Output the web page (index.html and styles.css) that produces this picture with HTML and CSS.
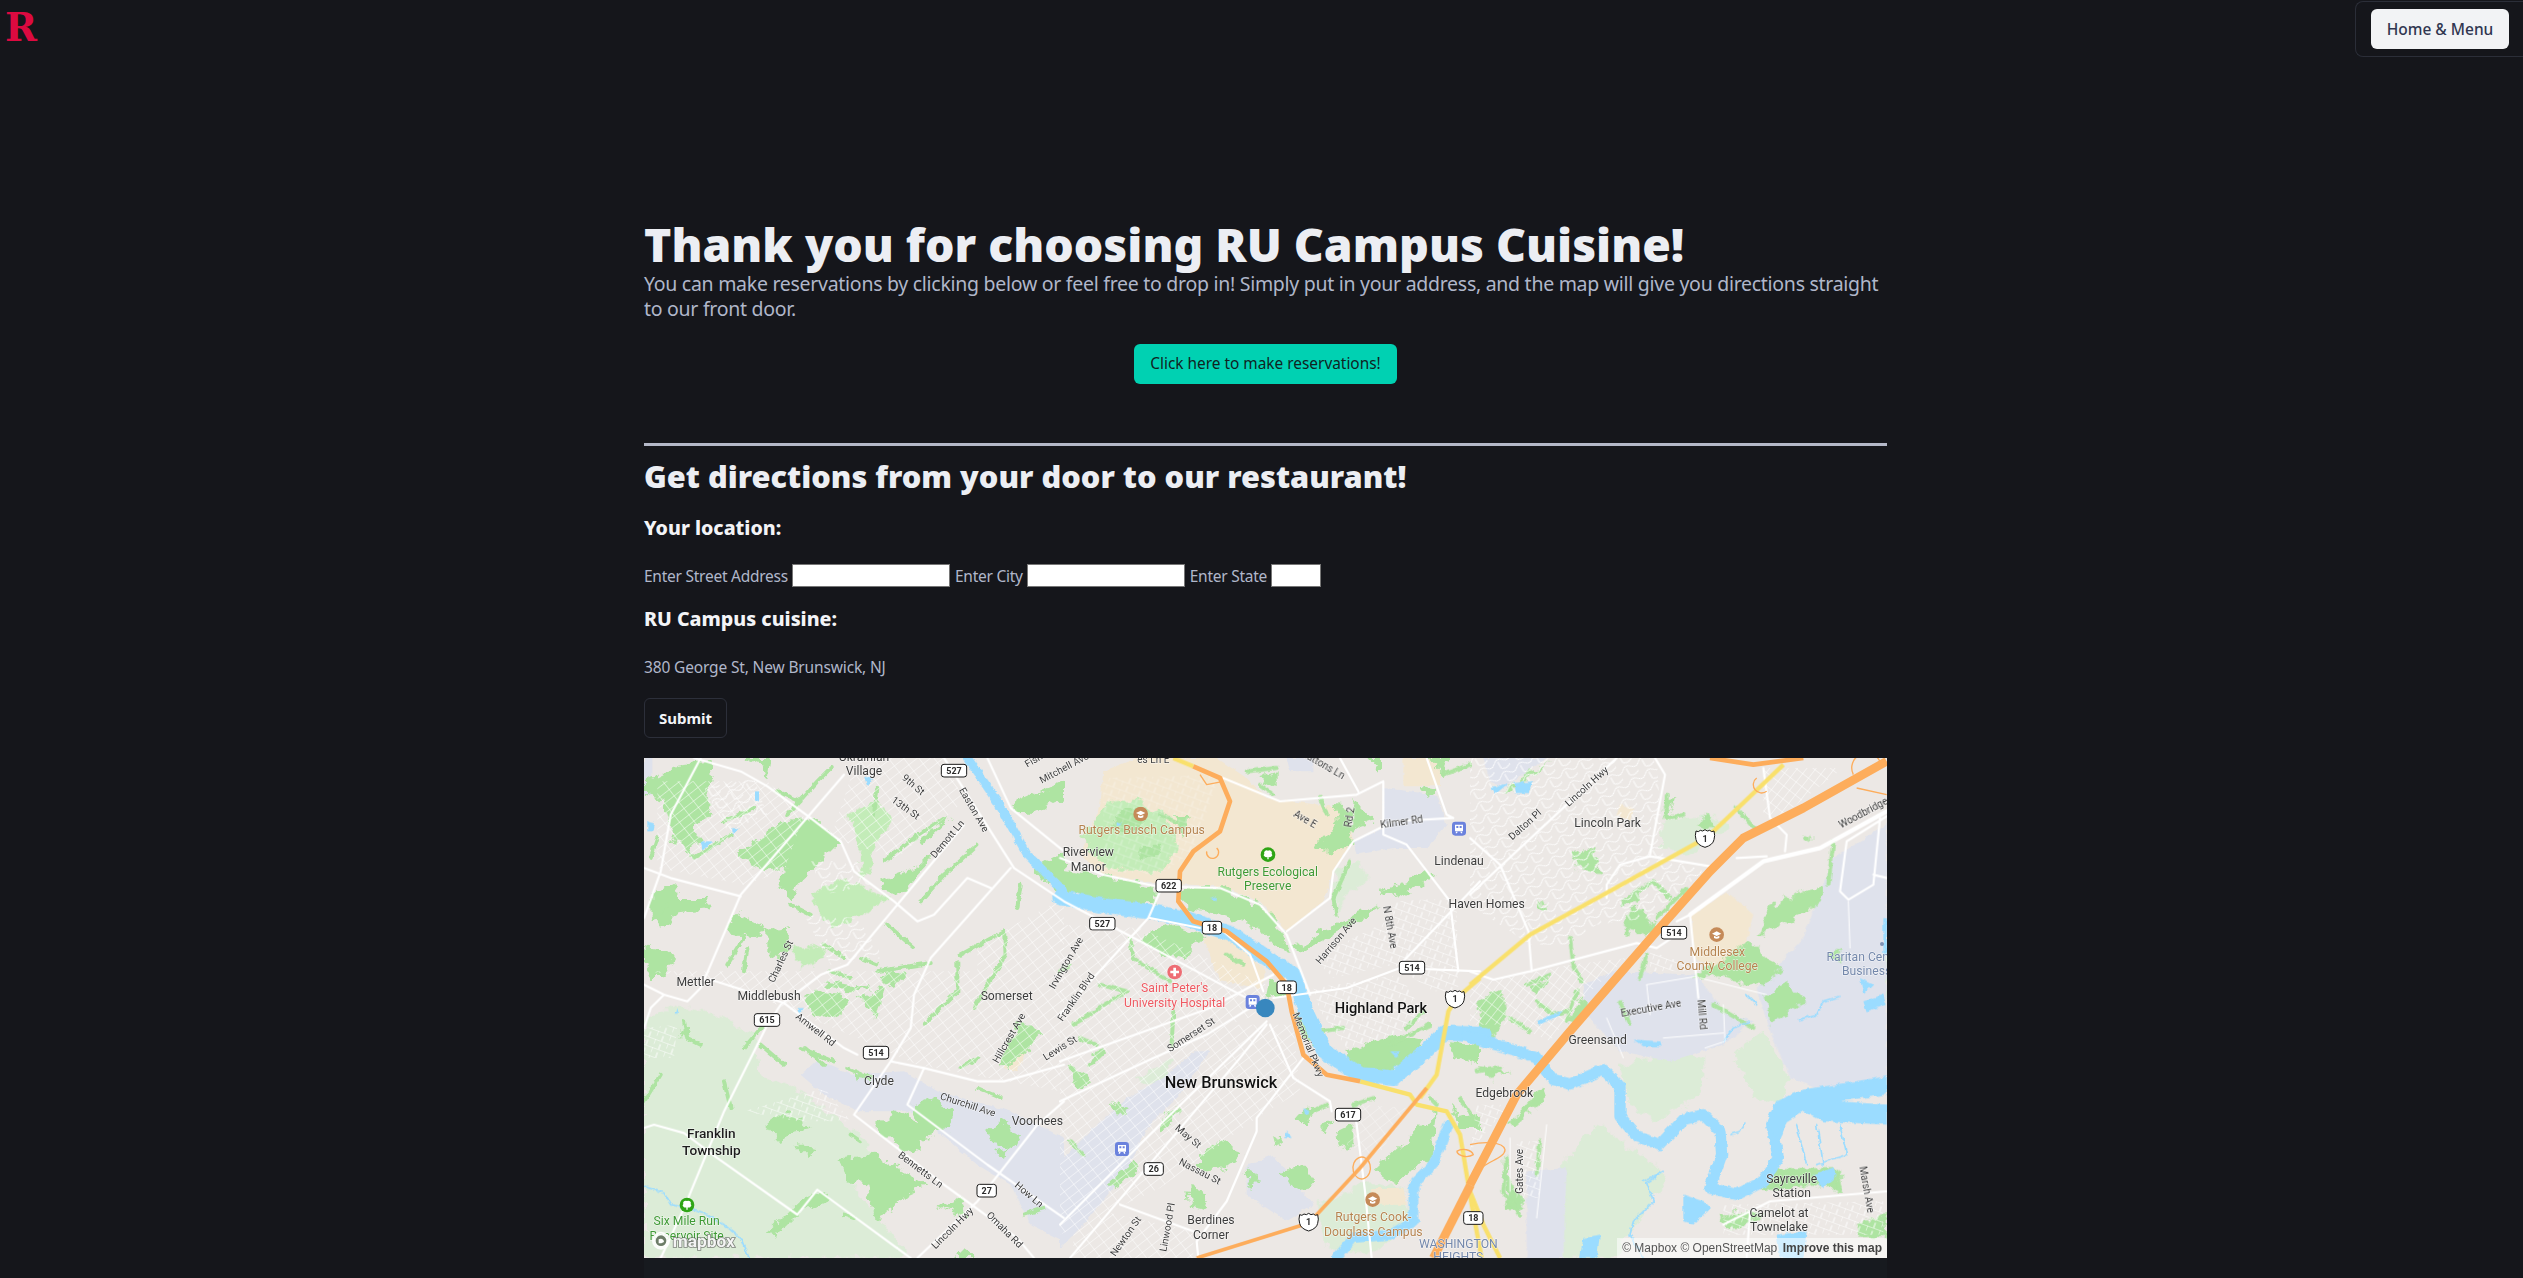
FILE: index.html
```html
<!DOCTYPE html>
<html lang="en">
<head>
<meta charset="utf-8">
<title>RU Campus Cuisine</title>
<link rel="stylesheet" href="styles.css">
</head>
<body>
<header class="topbar">
  <a class="logo" href="#">R</a>
  <nav class="menu-box"><button class="menu-btn" type="button">Home &amp; Menu</button></nav>
</header>
<main class="content">
  <h1 class="title">Thank you for choosing RU Campus Cuisine!</h1>
  <p class="lead">You can make reservations by clicking below or feel free to drop in! Simply put in your address, and the map will give you directions straight to our front door.</p>
  <div class="cta-row"><a class="cta" href="#">Click here to make reservations!</a></div>
  <hr class="rule">
  <h2 class="subtitle">Get directions from your door to our restaurant!</h2>
  <h3 class="label-head head-first">Your location:</h3>
  <form class="address-row">
    <label for="street">Enter Street Address</label><input id="street" class="field">
    <label for="city">Enter City</label><input id="city" class="field">
    <label for="state">Enter State</label><input id="state" class="field field-short">
  </form>
  <h3 class="label-head head-second">RU Campus cuisine:</h3>
  <p class="address">380 George St, New Brunswick, NJ</p>
  <button class="submit" type="button">Submit</button>
  <div class="map">
    <svg class="map-svg" viewBox="0 0 3729 1500" xmlns="http://www.w3.org/2000/svg" role="img" aria-label="Map of New Brunswick">
      <defs>
        <pattern id="g1" width="36" height="24" patternUnits="userSpaceOnUse" patternTransform="rotate(-38)"><path d="M0 0H36M0 0V24" class="grid"/></pattern>
        <pattern id="g2" width="32" height="22" patternUnits="userSpaceOnUse" patternTransform="rotate(-52)"><path d="M0 0H32M0 0V22" class="grid"/></pattern>
        <pattern id="g3" width="40" height="26" patternUnits="userSpaceOnUse" patternTransform="rotate(20)"><path d="M0 0H40M0 0V16M20 10V26" class="grid"/></pattern>
        <pattern id="g4" width="54" height="42" patternUnits="userSpaceOnUse" patternTransform="rotate(-30)"><path d="M0 10Q14 -4 27 10T54 10M12 10V32Q24 42 42 32" class="grid"/></pattern>
        <filter id="rough" x="-2%" y="-2%" width="104%" height="104%"><feTurbulence type="fractalNoise" baseFrequency=".03" numOctaves="4" seed="4"/><feDisplacementMap in="SourceGraphic" scale="42" xChannelSelector="R" yChannelSelector="G"/></filter>
        <filter id="rough-s" x="-2%" y="-2%" width="104%" height="104%"><feTurbulence type="fractalNoise" baseFrequency=".05" numOctaves="3" seed="9"/><feDisplacementMap in="SourceGraphic" scale="14" xChannelSelector="R" yChannelSelector="G"/></filter>
      </defs>
      <rect class="land" width="3729" height="1500"/>

      <g class="pale rough">
        <path d="M0 790L100 740 220 770 330 830 350 950 480 1010 640 1130 700 1200 610 1260 800 1500H0Z"/>
        <path transform="translate(2478 0)" d="M450 930L600 870 700 900 700 1000 560 1090 480 1040ZM280 1210L380 1100 520 1190 590 1260 500 1400 430 1500H270ZM790 890L880 820 960 960 930 1040 850 1020ZM1140 620L1200 540 1250 600V740H1160ZM580 190L720 170 780 210 650 290 570 270Z"/>
        <path transform="translate(1248 0)" d="M770 1340L930 1270 1040 1300 1050 1380 950 1480 800 1470ZM820 340L890 310 930 360 860 410 830 470ZM220 960L340 900 320 960 270 990Z"/>
      </g>

      <g class="urban rough-s">
        <path d="M470 950L520 905 620 950 780 940 880 1000 1100 1060 1260 1140V1450L1160 1400 1100 1280 1000 1220 880 1120 800 1060 640 1060 540 1010Z"/>
        <path d="M0 0H25V110H0Z"/>
        <path transform="translate(1248 0)" d="M0 1210L100 1110 200 1020 310 960 400 880 450 880 360 1010 260 1110 200 1240 70 1400 0 1470ZM560 1220L640 1190 760 1340 680 1390 560 1310ZM970 90L1130 110 1160 200 1100 270 1000 270 890 290 880 250 970 210ZM680 0H760V40H690Z"/>
        <path transform="translate(2478 0)" d="M900 820L860 690 1000 540 1090 300 1250 200V960L1040 990 960 960ZM340 680L430 640 680 650 760 760 850 790 760 860 600 910 450 880 340 760ZM170 1240L290 1230 280 1500H170ZM40 0H230L100 90 60 70Z"/>
      </g>

      <g class="campus rough-s">
        <path transform="translate(1248 0)" d="M130 40L230 0H470L560 60 620 120 850 150 880 250 820 340 790 430 680 520 600 430 480 385 290 375 130 350 60 290 120 150ZM430 540L500 530 620 640 600 690 480 670ZM930 1290L1030 1290 1040 1340 950 1340ZM1030 0H1140V85H1030Z"/>
        <path transform="translate(2478 0)" d="M665 470L770 400 850 470 830 550 750 640 670 600ZM450 140L490 150 480 190 440 170Z"/>
        <path d="M1090 900L1150 870 1120 940 1080 930Z"/>
      </g>

      <g class="parkpale rough">
        <path d="M500 410L600 360 660 390 730 420 660 470 560 510 520 470ZM610 170L700 130 750 190 690 250 680 340 640 360 650 260ZM440 570L530 560 540 600 470 630ZM550 720L620 720 590 770 550 790Z"/>
        <path transform="translate(1248 0)" d="M380 390L480 400 490 430 420 440ZM60 240L150 130 230 125 310 170 360 260 330 310 280 345 130 330Z"/>
      </g>
      <g class="green rough">
        <path d="M30 60L110 20 200 10 210 60 180 110 210 150 150 200 170 250 130 290 90 240 70 170 50 120 0 110 0 170 0 70ZM350 20L300 0H380L370 70ZM280 290L350 240 420 190 500 180 590 250 540 300 470 380 440 420 400 380 430 330 350 340ZM710 370L810 330 860 290 860 310 780 400 740 410ZM830 240L920 170 900 200 840 260ZM20 410L90 370 100 420 190 420 190 450 110 460 60 510 30 490ZM250 500L280 465 370 510 350 540 260 530ZM370 510L430 500 440 570 400 600 370 580ZM0 570L60 580 90 600 60 660 20 660 20 610 0 610ZM480 710L530 700 620 720 590 770 550 790 510 770ZM640 720L720 690 700 780 670 750ZM540 670L690 690 640 700 560 690ZM710 650L740 630 780 650 750 690 720 670ZM1060 920L1130 790 1200 830 1130 890 1090 930ZM1100 140L1260 70V120L1150 170ZM1170 330L1260 280V420L1200 370ZM800 1040L850 1020 930 1060 910 1120 830 1140 830 1090ZM690 1100L760 1060 830 1090 830 1190 770 1170ZM375 1420L470 1330 520 1300 560 1330 460 1370 390 1440ZM590 1200L700 1190 760 1230 850 1280 780 1310 740 1360 690 1380 670 1280 610 1270ZM1030 1120L1070 1090 1130 1130 1110 1170 1050 1160ZM370 1100L420 1060 500 1110 440 1120 410 1150ZM450 1160L520 1170 490 1200ZM1050 1180L1090 1170 1080 1200ZM880 1350L950 1320 970 1380ZM620 950L680 960 650 970ZM960 1470L1000 1500H930ZM100 840L140 830 120 800Z"/>
        <path transform="translate(1248 0)" d="M0 330L60 340 130 350 280 385 290 440 130 430 0 395ZM370 390L480 390 600 440 660 510 690 580 640 560 600 510 480 470 380 450ZM240 540L330 495 430 530 380 600 300 590ZM770 260L830 190 880 200 880 260 800 290ZM820 140L880 150 870 200 830 190ZM880 120L940 190 880 210ZM960 400L1100 340 1130 350 1000 420ZM700 570L880 470 960 440 880 500 710 590ZM610 720L640 670 680 700 650 730ZM700 760L760 830 800 880 770 880 720 820ZM860 880L1000 830 1090 850 1070 890 970 960 880 930ZM1170 850L1260 860V920L1180 900ZM940 1240L1130 1060 1120 1190 1000 1280ZM420 1180L490 1150 550 1190 500 1230 420 1240ZM385 1290L450 1300 440 1360 390 1350ZM300 1080L360 1040 330 1110 300 1120ZM670 1240L720 1220 770 1280 700 1290ZM150 1270L220 1210 240 1220 170 1290ZM20 920L100 970 60 990 30 960ZM150 1030L210 1050 180 1070ZM820 1130L880 1100 880 1170 830 1160ZM780 1100L820 1090 800 1130ZM560 1240L600 1260 570 1290ZM630 1130L670 1150 640 1170ZM700 1080L770 1040 740 1100ZM1170 1030L1200 1080 1260 1070V1110L1200 1110ZM1080 80L1140 90 1100 130ZM1100 0H1170L1150 50ZM920 0H960V50ZM590 60L650 40 650 90ZM250 260L300 260 280 300 240 310ZM340 180L380 180 370 230ZM150 180L210 150 260 180 220 230 160 210Z"/>
        <path transform="translate(2478 0)" d="M860 530L900 450 990 400 1060 380 1060 420 980 480 880 530ZM670 660L840 550 930 640 880 690 790 670 740 650ZM890 710L950 670 1000 730 900 800ZM460 500L500 440 560 500 530 530 480 520ZM450 420L510 390 515 420 460 440ZM310 280L370 270 390 350 330 340ZM20 730L100 690 110 780 60 850 30 800ZM290 790L340 710 355 750 310 800ZM580 130L610 120 590 180ZM680 210L710 160 740 210ZM1070 600L1110 570 1110 610ZM750 1370L880 1360 840 1400 770 1410ZM890 1230L1110 1230 1110 1300 1020 1280 880 1300ZM175 680L240 660 200 720ZM30 930L130 940 60 960ZM210 420L235 450 205 455ZM120 1090L220 980 230 1020 130 1110ZM100 1200L130 1290 170 1350 110 1350ZM1160 1400L1250 1370 1250 1440 1180 1440ZM200 30L240 10 130 100 100 100ZM1000 240L1020 230 1020 260Z"/>
      </g>
      <g class="strip rough-s">
        <path d="M30 480L70 440M250 620L300 540M300 640L310 570M120 790L130 840 170 860M300 870L360 800M350 860L420 920M470 870L570 910M610 930L680 960M0 1030L50 950M240 970L260 1050M860 615L700 640M950 590L1080 520 1085 590 1030 680 990 750M940 610L940 700 840 800M730 500L810 570M650 600L700 620M100 120L150 60M120 180L200 170M150 300L260 230M240 190L330 150M400 100L470 130M430 170L520 70 560 30M700 90L690 170M720 310L810 240 900 180M830 430L900 350 1000 260M1130 380L1120 450M480 870L540 920M1000 900L950 930M1000 990L1070 1020M620 1130L650 1150M1140 1370L1200 1350M600 1370L630 1380M440 440L500 470M540 560L600 600M420 200L460 260M20 300L40 240M560 640L620 660"/>
        <path transform="translate(1248 0)" d="M210 540L220 600 330 670M120 680L200 700 40 800M340 760L335 860M100 890L130 880 90 920M0 640L30 620M30 1150L70 1190M1040 810L1090 760M990 860L1110 800M780 820L850 810M1110 1020L1130 1040M1200 1020L1240 1080M560 40L650 30M870 310L820 420 830 470M1150 50L1230 20M300 170L350 190M600 80L640 110M780 120L800 170M60 840L110 860M500 590L550 620M760 1060L800 1040M880 1040L940 1020"/>
        <path transform="translate(2478 0)" d="M30 820L60 720M170 680L240 650M200 730L250 770 290 760M120 780L180 820M460 430L550 370 600 420M560 480L650 390M490 450L470 530M300 540L310 620 335 670M510 660L530 590M450 730L480 800M110 1200L100 1300 150 1370M210 1150L200 1250M800 150L860 220M1090 250L1075 380M590 110L590 180 640 170M1100 1240L1110 1300M290 790L320 700M730 740L850 810M20 940L90 930"/>
      </g>

      <g class="street-g1"><path fill="url(#g1)" d="M0 640H1250V1000L820 920 640 840 400 740 180 660ZM40 70H370L480 170 420 340 300 380 40 330ZM1000 560L1260 420 1260 760 1000 700ZM640 0H900L960 130 760 300 560 240Z"/></g>
      <g class="street-g2" transform="translate(1248 0)">
        <path fill="url(#g1)" d="M0 500L240 510 620 680 620 760 0 980ZM0 990L450 800 700 800 720 1000 590 1080 300 1290 0 1430ZM40 1340L400 1420 400 1500H40Z"/>
        <path fill="url(#g3)" d="M760 690L1020 650 1100 780 980 840 860 870 780 760ZM1000 430L1190 420 1195 700 1120 700 1000 620 820 660 760 600 1000 480Z"/>
        <path fill="url(#g3)" d="M130 60L480 50 400 280 300 350 130 340Z" opacity=".5"/>
        <path fill="url(#g1)" d="M900 1040L1050 1050 950 1200 860 1160Z" opacity=".6"/>
      </g>
      <g class="street-g3" transform="translate(2478 0)">
        <path fill="url(#g4)" d="M0 0H560L580 290 700 340 540 480 380 500 290 560 180 560 0 440Z"/>
        <path fill="url(#g2)" d="M0 680L300 620 470 600 340 720 240 850 130 800 0 800Z"/>
        <path fill="url(#g2)" d="M880 30H1120L940 170 880 170Z"/>
        <path fill="url(#g3)" d="M540 580L660 620 660 640 540 640ZM760 1340L1240 1330 1240 1430 760 1430ZM20 1040L120 1040 0 1180Z"/>
        <path fill="url(#g3)" d="M140 1150H210V1320H140Z"/>
      </g>
      <g class="street-g1"><path fill="url(#g4)" d="M180 90L330 60 370 170 250 220ZM500 310L640 310 680 380 540 410ZM480 470L640 480 720 600 560 620Z"/><path fill="url(#g3)" d="M300 1060L540 990 620 1090 460 1090ZM0 810L100 800 90 900 0 900Z"/></g>

      <g class="water rough-s">
        <path d="M970 0L1060 130 1150 290 1260 400" class="w-thin"/>
        <path d="M1248 418L1388 445 1528 462 1628 482 1768 530 1868 600 1950 650 1985 760 2040 880 2150 950 2250 960 2340 885 2400 825 2520 830" class="w-main"/>
        <path transform="translate(2478 0)" d="M-10 835L130 875 200 900 250 965 300 978 400 935 450 985 450 1075 500 1135 570 1160 640 1085 700 1070 750 1120 755 1190 720 1290 800 1310 880 1270 925 1200 905 1100 925 1050" class="w-mid"/>
        <path transform="translate(2478 0)" class="w-fill" d="M890 1090L920 1030 1000 995 1250 955V1010L1110 1030 1250 1040V1100L1060 1090 1000 1060 950 1090 930 1150ZM640 1310L700 1330 720 1350 670 1400 640 1390ZM1030 1250L1090 1225 1100 1255 1060 1290ZM920 1430L1010 1420 1000 1500H930ZM340 1440L390 1430 380 1500H330ZM490 845L570 850 575 865 520 865ZM130 75L190 70 175 105 135 105ZM65 90L115 75 75 110ZM200 790L280 755 260 775 210 800ZM1240 480H1250V590H1240ZM1170 660L1210 680 1180 710ZM1180 730L1240 710 1250 740 1190 760Z"/>
        <path transform="translate(2478 0)" class="w-line" d="M520 1270L580 1240 530 1275 550 1330 490 1390 480 1430 520 1500M760 850L790 810 840 790M985 785L1040 770 1060 730 1110 715M780 1130L810 1120 825 1095M980 1100L1010 1220M1040 1100L1060 1220M1110 1100L1130 1190 1040 1220M830 710L860 740"/>
        <path transform="translate(1248 0)" class="w-lineb" d="M830 1500L880 1440 990 1430 1060 1390 1060 1280 1120 1220 1165 1100"/>
        <path transform="translate(1248 0)" class="w-fill" d="M990 880L1020 880 1010 900ZM730 1050L750 1060 735 1070ZM680 1120L695 1140 675 1140ZM170 190L185 195 170 205ZM450 420L470 415 470 430Z"/>
        <path class="w-fill" d="M10 190L30 195 25 220 10 220ZM170 250L205 250 175 275ZM265 210L285 210 265 230ZM330 100L345 100 345 130 330 125ZM660 55L685 60 670 85ZM100 750L105 770 95 770ZM460 750L480 750 465 770Z"/>
        <path class="w-line" d="M0 1285L60 1305 80 1340 130 1350 190 1370 240 1400 290 1440 315 1500"/>
      </g>

      <g class="road">
        <path d="M150 0L290 40 370 85 500 180 590 250 630 340 750 430 820 490 870 470 970 360 1040 390"/>
        <path d="M600 50L290 410 170 690 130 730 60 710 20 750 0 810"/>
        <path d="M1100 330L860 600 810 710 800 810 740 910 630 1070 900 1280 1120 1440 1170 1500"/>
        <path d="M0 330L80 360 290 415"/>
        <path d="M170 0L80 170 50 340 0 480"/>
        <path d="M960 200L610 620 530 650 410 740 370 800 240 1060 120 1350 50 1500"/>
        <path d="M200 665L420 735 600 870 640 890"/>
        <path d="M740 910L840 930 1000 970 1080 970 1260 920"/>
        <path d="M840 930L790 1040 1030 1220 1260 1380"/>
        <path d="M0 1110L30 1100 120 1125 220 1200 460 1370 520 1295 800 1500"/>
        <path d="M900 0L1040 220 1110 330 1260 430 1508 560 1808 720"/>
        <path d="M820 1500L1000 1330 1180 1100 1260 1030"/>
        <path d="M1030 0L1100 150 1260 280"/>
        <path d="M0 680L60 710"/>
        <path transform="translate(1248 0)" d="M0 300L130 350 290 385 480 390 600 440 680 530 750 710"/>
        <path transform="translate(1248 0)" d="M270 480L420 510M300 400L265 480 100 660 0 770M640 720L860 690 1020 630 1260 640"/>
        <path transform="translate(1248 0)" d="M610 700L570 590 490 520M640 650L450 750 0 910M570 750L440 830 280 900 0 1030M620 790L300 1100 0 1400M620 800L540 900 30 1500M630 800L700 960 810 1030 815 1060"/>
        <path transform="translate(1248 0)" d="M730 900L590 1080 590 1120 500 1330 410 1450 415 1500M180 1340L400 1420M970 70L970 230 1040 260 1170 430 1195 640M1180 180L1000 190 880 250 820 340 810 420 680 520M1260 370L1020 620M490 60L660 130 890 110 970 70M840 0L895 100M1100 0L1160 170 1180 180"/>
        <path transform="translate(1248 0)" d="M885 1060L915 1300 935 1500"/>
        <path transform="translate(2478 0)" d="M440 0L0 410M0 240L90 320 175 520 185 640M0 640L70 665 180 640 500 555 560 570 620 530M555 0L585 50 540 290M540 295L450 320 410 380 410 420M540 295L720 325M880 30L900 180 950 230 945 280M620 490L660 470M800 300L890 295"/>
        <path transform="translate(2478 0)" class="road-thick" d="M660 470L880 310 1050 270 1250 160"/>
        <path transform="translate(2478 0)" d="M1250 175L1130 250 1110 400 1135 425 1210 380 1230 180M1210 350L1250 360M660 470L685 720M760 1400L900 1330 1250 1300M840 1360L830 1500"/>
        <path transform="translate(2478 0)" class="road-fine" d="M690 660L890 710M530 680L680 655M580 840L760 825M530 680L540 770M760 740L765 850 705 870M1135 430L1140 570M410 780L460 900M120 1140L120 1300M230 1100L200 1380"/>
      </g>

      <g class="hwy-y">
        <path transform="translate(2478 0)" d="M940 20L730 220 680 255 400 410 180 530 0 680"/>
        <path transform="translate(1248 0)" d="M1260 660L1190 720 1165 760 1130 950 1080 1020"/>
        <path transform="translate(1248 0)" d="M900 970L1050 1010 1070 1040 1160 1060 1200 1130 1235 1340 1265 1500"/>
        <path transform="translate(2478 0)" d="M0 1300L40 1400 90 1500"/>
        <path transform="translate(1248 0)" d="M340 0L400 25"/>
      </g>
      <g class="hwy-o">
        <path transform="translate(1248 0)" d="M400 25L480 60 510 130 480 220 400 280 360 340 355 430 400 490 500 520 620 610 680 680 695 760 730 890 800 950 900 970"/>
        <path transform="translate(1248 0)" class="hwy-thin" d="M1100 990L900 1230 770 1370 730 1400 410 1500"/>
        <path transform="translate(2478 0)" d="M720 0L850 20 1000 0"/>
        <path transform="translate(1248 0)" class="ramp" d="M880 1240a24 30 0 1 0 50 -20 24 30 0 0 0 -50 20M1190 1180a30 20 0 0 0 50 10 30 20 0 0 0 -50 -10M440 280a18 18 0 1 0 30 -10M420 50l20 30 50 -10"/>
        <path transform="translate(2478 0)" class="ramp" d="M0 1160C40 1150 100 1150 105 1175 105 1195 70 1205 40 1225M1150 50a40 40 0 0 1 80 -40M1160 90L1250 110M860 60a24 24 0 0 0 30 40"/>
      </g>
      <g class="hwy-w">
        <path transform="translate(2478 0)" d="M1250 10L1000 150 820 240 720 340 560 520 300 820 140 1010 0 1280"/>
        <path transform="translate(1248 0)" d="M1232 1280L1120 1500"/>
      </g>

      <g class="lb">
        <text x="660" y="8">Ukrainian</text><text x="660" y="50">Village</text>
        <text x="155" y="685">Mettler</text><text x="375" y="725">Middlebush</text><text x="1088" y="725">Somerset</text>
        <text x="705" y="980">Clyde</text><text x="1180" y="1100">Voorhees</text>
        <text class="lb-dark" x="202" y="1140">Franklin</text><text class="lb-dark" x="202" y="1190">Township</text>
        <text class="lb-park" x="128" y="1402">Six Mile Run</text><text class="lb-park" x="128" y="1445">Reservoir Site</text>
      </g>
      <g class="lb lb-road">
        <text transform="rotate(40 808 80)" x="808" y="90">9th St</text>
        <text transform="rotate(35 785 150)" x="785" y="160">13th St</text>
        <text transform="rotate(60 990 155)" x="990" y="165">Easton Ave</text>
        <text transform="rotate(-50 910 243)" x="910" y="253">Demott Ln</text>
        <text transform="rotate(-65 410 610)" x="410" y="620">Charles St</text>
        <text transform="rotate(38 515 815)" x="515" y="825">Amwell Rd</text>
        <text transform="rotate(-60 1095 840)" x="1095" y="850">Hillcrest Ave</text>
        <text transform="rotate(18 972 1040)" x="972" y="1050">Churchill Ave</text>
        <text transform="rotate(37 830 1235)" x="830" y="1245">Bennetts Ln</text>
        <text transform="rotate(40 1155 1310)" x="1155" y="1320">How Ln</text>
        <text transform="rotate(45 1082 1415)" x="1082" y="1425">Omaha Rd</text>
        <text transform="rotate(-45 925 1410)" x="925" y="1420">Lincoln Hwy</text>
        <text transform="rotate(-60 1266 615)" x="1266" y="625">Irvington Ave</text>
        <text transform="rotate(-55 1296 717)" x="1296" y="727">Franklin Blvd</text>
        <text transform="rotate(-32 1248 870)" x="1248" y="880">Lewis St</text>
        <text transform="rotate(-28 1260 30)" x="1260" y="40">Mitchell Ave</text>
        <text transform="rotate(-30 1180 0)" x="1180" y="10">Fisher</text>
      </g>
      <g class="lb" transform="translate(1248 0)">
        <text x="85" y="294">Riverview</text><text x="85" y="338">Manor</text>
        <text class="lb-campus" x="245" y="228">Rutgers Busch Campus</text>
        <text class="lb-park" x="623" y="353">Rutgers Ecological</text><text class="lb-park" x="623" y="396">Preserve</text>
        <text class="lb-hosp" x="344" y="702">Saint Peter's</text><text class="lb-hosp" x="344" y="746">University Hospital</text>
        <text class="lb-city" x="483" y="990">New Brunswick</text><text class="lb-hp" x="963" y="765">Highland Park</text>
        <text x="453" y="1398">Berdines</text><text x="453" y="1442">Corner</text>
        <text class="lb-campus" x="940" y="1390">Rutgers Cook-</text><text class="lb-campus" x="940" y="1433">Douglass Campus</text>
        <text class="lb-nbhd" x="1195" y="1470">WASHINGTON</text><text class="lb-nbhd" x="1195" y="1510">HEIGHTS</text>
      </g>
      <g class="lb lb-road" transform="translate(1248 0)">
        <text x="280" y="16">es Ln E</text>
        <text transform="rotate(30 735 185)" x="735" y="195">Ave E</text>
        <text transform="rotate(-80 868 178)" x="868" y="188">Rd 2</text>
        <text transform="rotate(-8 1025 192)" x="1025" y="202">Kilmer Rd</text>
        <text transform="rotate(30 790 20)" x="790" y="30">Suttons Ln</text>
        <text transform="rotate(-33 393 830)" x="393" y="840">Somerset St</text>
        <text transform="rotate(68 745 860)" x="745" y="870">Memorial Pkwy</text>
        <text transform="rotate(-50 828 548)" x="828" y="558">Harrison Ave</text>
        <text transform="rotate(80 990 508)" x="990" y="518">N 8th Ave</text>
        <text transform="rotate(40 385 1135)" x="385" y="1145">May St</text>
        <text transform="rotate(27 420 1240)" x="420" y="1250">Nassau St</text>
        <text transform="rotate(-55 197 1435)" x="197" y="1445">Newton St</text>
        <text transform="rotate(-80 322 1408)" x="322" y="1418">Linwood Pl</text>
      </g>
      <g class="lb" transform="translate(2478 0)">
        <text x="-33" y="322">Lindenau</text><text x="50" y="450">Haven Homes</text>
        <text x="413" y="207">Lincoln Park</text><text x="383" y="858">Greensand</text><text x="103" y="1018">Edgebrook</text>
        <text class="lb-campus" x="742" y="593">Middlesex</text><text class="lb-campus" x="742" y="636">County College</text>
        <text class="lb-nbhd" x="1185" y="610">Raritan Center</text><text class="lb-nbhd" x="1190" y="652">Business</text>
        <text x="965" y="1275">Sayreville</text><text x="965" y="1318">Station</text>
        <text x="927" y="1377">Camelot at</text><text x="927" y="1420">Townelake</text>
      </g>
      <g class="lb lb-road" transform="translate(2478 0)">
        <text transform="rotate(-42 350 85)" x="350" y="95">Lincoln Hwy</text>
        <text transform="rotate(-42 165 200)" x="165" y="210">Dalton Pl</text>
        <text transform="rotate(-28 1180 165)" x="1180" y="175">Woodbridge</text>
        <text transform="rotate(-10 543 752)" x="543" y="762">Executive Ave</text>
        <text transform="rotate(85 695 770)" x="695" y="780">Mill Rd</text>
        <text transform="rotate(-90 148 1240)" x="148" y="1250">Gates Ave</text>
        <text transform="rotate(80 1190 1295)" x="1190" y="1305">Marsh Ave</text>
      </g>

      <g class="shields">
        <g transform="translate(930 38)"><rect x="-38" y="-19" width="76" height="38" rx="8"/><text y="10">527</text></g>
        <g transform="translate(369 786)"><rect x="-38" y="-19" width="76" height="38" rx="8"/><text y="10">615</text></g>
        <g transform="translate(696 884)"><rect x="-38" y="-19" width="76" height="38" rx="8"/><text y="10">514</text></g>
        <g transform="translate(1028 1298)"><rect x="-29" y="-19" width="58" height="38" rx="8"/><text y="10">27</text></g>
        <g transform="translate(1574 383)"><rect x="-38" y="-19" width="76" height="38" rx="8"/><text y="10">622</text></g>
        <g transform="translate(1375 497)"><rect x="-38" y="-19" width="76" height="38" rx="8"/><text y="10">527</text></g>
        <g transform="translate(1704 509)"><rect x="-29" y="-19" width="58" height="38" rx="8"/><text y="10">18</text></g>
        <g transform="translate(1928 688)"><rect x="-29" y="-19" width="58" height="38" rx="8"/><text y="10">18</text></g>
        <g transform="translate(2304 629)"><rect x="-38" y="-19" width="76" height="38" rx="8"/><text y="10">514</text></g>
        <g transform="translate(2112 1070)"><rect x="-38" y="-19" width="76" height="38" rx="8"/><text y="10">617</text></g>
        <g transform="translate(1529 1233)"><rect x="-29" y="-19" width="58" height="38" rx="8"/><text y="10">26</text></g>
        <g transform="translate(2488 1380)"><rect x="-29" y="-19" width="58" height="38" rx="8"/><text y="10">18</text></g>
        <g transform="translate(3090 524)"><rect x="-38" y="-19" width="76" height="38" rx="8"/><text y="10">514</text></g>
        <g transform="translate(2433 723)"><path d="M-27-22Q-20-17-14-24-7-19 0-26 7-19 14-24 20-17 27-22 31-8 27 4 24 20 0 27-24 20-27 4-31-8-27-22Z"/><text y="10">1</text></g>
        <g transform="translate(1994 1392)"><path d="M-27-22Q-20-17-14-24-7-19 0-26 7-19 14-24 20-17 27-22 31-8 27 4 24 20 0 27-24 20-27 4-31-8-27-22Z"/><text y="10">1</text></g>
        <g transform="translate(3183 241)"><path d="M-27-22Q-20-17-14-24-7-19 0-26 7-19 14-24 20-17 27-22 31-8 27 4 24 20 0 27-24 20-27 4-31-8-27-22Z"/><text y="10">1</text></g>
      </g>

      <g class="poi">
        <g transform="translate(1490 168)"><circle class="poi-edu" r="22"/><path class="poi-w" d="M-14-3L0-10 14-3 0 4ZM-8 3V10Q0 14 8 10V3L0 7Z"/></g>
        <g transform="translate(2186 1325)"><circle class="poi-edu" r="22"/><path class="poi-w" d="M-14-3L0-10 14-3 0 4ZM-8 3V10Q0 14 8 10V3L0 7Z"/></g>
        <g transform="translate(3218 530)"><circle class="poi-edu" r="22"/><path class="poi-w" d="M-14-3L0-10 14-3 0 4ZM-8 3V10Q0 14 8 10V3L0 7Z"/></g>
        <g transform="translate(1872 290)"><circle class="poi-park" r="22"/><path class="poi-w" d="M-2 14V2H2V14ZM0-12A8 7 0 0 1 11-3 7 6 0 0 1 0 5 7 6 0 0 1-11-3 8 7 0 0 1 0-12Z"/></g>
        <g transform="translate(129 1341)"><circle class="poi-park" r="22"/><path class="poi-w" d="M-2 14V2H2V14ZM0-12A8 7 0 0 1 11-3 7 6 0 0 1 0 5 7 6 0 0 1-11-3 8 7 0 0 1 0-12Z"/></g>
        <g transform="translate(1592 642)"><circle class="poi-hosp" r="22"/><path class="poi-w" d="M-4-13H4V-4H13V4H4V13H-4V4H-13V-4H-4Z"/></g>
        <g transform="translate(1826 732)"><rect class="poi-rail" x="-21" y="-21" width="42" height="42" rx="10"/><path class="poi-w" d="M-12-12H12V8H-12ZM-8-8V-2H-2V-8ZM2-8V-2H8V-8ZM-9 9H-4L-6 14H-10ZM4 9H9L10 14H6Z"/></g>
        <g transform="translate(1434 1173)"><rect class="poi-rail" x="-21" y="-21" width="42" height="42" rx="10"/><path class="poi-w" d="M-12-12H12V8H-12ZM-8-8V-2H-2V-8ZM2-8V-2H8V-8ZM-9 9H-4L-6 14H-10ZM4 9H9L10 14H6Z"/></g>
        <g transform="translate(2445 212)"><rect class="poi-rail" x="-21" y="-21" width="42" height="42" rx="10"/><path class="poi-w" d="M-12-12H12V8H-12ZM-8-8V-2H-2V-8ZM2-8V-2H8V-8ZM-9 9H-4L-6 14H-10ZM4 9H9L10 14H6Z"/></g>
        <circle class="poi-nbhd" cx="3714" cy="558" r="6"/>
      </g>

      <circle class="marker" cx="1864" cy="750" r="28"/>

      <g class="mb-logo">
        <circle cx="51" cy="1448" r="27"/>
        <circle class="mb-hole" cx="51" cy="1448" r="16"/>
        <path class="mb-mark" d="M44 1456V1444A10 10 0 0 1 60 1452L52 1456Z"/>
        <text x="86" y="1466">mapbox</text>
      </g>
    </svg>
    <div class="attrib"><span>© Mapbox</span> <span>© OpenStreetMap</span> <strong>Improve this map</strong></div>
  </div>
  <div class="foot-band"></div>
</main>
</body>
</html>
```

FILE: styles.css
```css
* { box-sizing: border-box; }
html, body { margin: 0; height: 1278px; overflow: hidden; }
body {
  background: #15161b;
  color: #b0b7ca;
  font-family: "Noto Sans", "Open Sans", sans-serif;
}
.topbar {
  height: 58px;
  display: flex;
  justify-content: space-between;
  align-items: flex-start;
}
.logo {
  margin: 6px 0 0 5px;
  font: 900 38.5px/44px "DejaVu Serif", serif;
  color: #dc0a40;
  text-decoration: none;
}
.menu-box {
  margin-top: 1px;
  width: 168px;
  height: 56px;
  border: 1px solid #2b2e38;
  border-right: 0;
  border-radius: 8px 0 0 8px;
  padding: 7px 14px 0 15px;
}
.menu-btn {
  width: 138px;
  height: 40px;
  border: 0;
  border-radius: 6px;
  background: #f2f3f5;
  color: #303650;
  font: 500 15.5px "Noto Sans", sans-serif;
  padding: 0;
}
.content {
  width: 1243px;
  margin: 0 0 0 644px;
  padding-top: 158px;
}
.title {
  margin: 0;
  font: 900 46.35px/56px "Noto Sans", sans-serif;
  color: #eceef3;
  height: 55px;
}
.lead {
  margin: 0;
  font: 400 19.5px/25px "Noto Sans", sans-serif;
  letter-spacing: -.28px;
}
.cta-row {
  display: flex;
  margin: 23px 0 0;
  padding-left: 490px;
}
.cta {
  width: 263px;
  height: 40px;
  line-height: 40px;
  text-align: center;
  border-radius: 6px;
  background: #00d1b2;
  color: #10231f;
  font-size: 15.4px;
  text-decoration: none;
  white-space: nowrap;
}
.rule {
  margin: 59px 0 0;
  border: 0;
  height: 3px;
  background: #b4b8c8;
}
.subtitle {
  margin: 12px 0 0;
  font: 900 30.75px/36px "Noto Sans", sans-serif;
  color: #eceef3;
}
.label-head {
  margin: 0;
  font: 800 19.6px/26px "Noto Sans", sans-serif;
  color: #f3f4f7;
}
.head-first { margin-top: 21px; }
.head-second { margin-top: 19px; }
.address-row {
  display: flex;
  align-items: center;
  margin: 23px 0 0;
  height: 23px;
  font-size: 15.5px;
  letter-spacing: -.25px;
  white-space: nowrap;
}
.field {
  width: 158px;
  height: 23px;
  margin: 0 5px 0 4px;
  border: 1px solid #767676;
  border-radius: 0;
  background: #fff;
  padding: 0;
}
.field-short { width: 50px; margin-right: 0; }
.address {
  margin: 24px 0 0;
  font-size: 15.5px;
  letter-spacing: -.15px;
  line-height: 22px;
}
.submit {
  display: block;
  margin: 20px 0 0;
  width: 83px;
  height: 40px;
  padding: 0;
  background: transparent;
  border: 1px solid #2c2f3a;
  border-radius: 6px;
  color: #f3f4f7;
  font: 700 15px "Noto Sans", sans-serif;
}
.map {
  position: relative;
  margin-top: 20px;
  width: 1243px;
  height: 500px;
  overflow: hidden;
}
.map-svg { display: block; width: 1243px; height: 500px; }
.foot-band { height: 20px; background: #171a1f; }

.land { fill: #ece8e5; }
.pale { fill: #dcecd7; }
.urban { fill: #dfe2ec; }
.campus { fill: #f3e7d1; }
.green { fill: #aee4a2; }
.parkpale { fill: #c3ecb8; }
.rough { filter: url(#rough); }
.rough-s { filter: url(#rough-s); }
.strip { fill: none; stroke: #aee4a2; stroke-width: 12; stroke-linecap: round; stroke-linejoin: round; }
.grid { stroke: #fff; stroke-width: 2.8; fill: none; }
.water { fill: none; stroke: #9bdcff; stroke-linejoin: round; stroke-linecap: round; }
.water .w-fill { fill: #9bdcff; stroke: none; }
.w-thin { stroke-width: 26; }
.w-main { stroke-width: 46; }
.w-mid { stroke-width: 34; }
.w-line { stroke-width: 5; }
.w-lineb { stroke-width: 30; }
.road { fill: none; stroke: #fff; stroke-width: 6.5; stroke-linejoin: round; stroke-linecap: round; }
.road .road-thick { stroke-width: 13; }
.road .road-fine { stroke-width: 3; }
.hwy-y { fill: none; stroke: #f9e06c; stroke-width: 13; stroke-linejoin: round; }
.hwy-o { fill: none; stroke: #fdad5c; stroke-width: 14; stroke-linejoin: round; }
.hwy-o .hwy-thin { stroke-width: 11; }
.hwy-o .ramp { stroke-width: 4; }
.hwy-w { fill: none; stroke: #fdad5c; stroke-width: 26; stroke-linejoin: round; }

.lb text {
  font: 400 36.5px Roboto, sans-serif;
  fill: #3c3c3c;
  text-anchor: middle;
  paint-order: stroke;
  stroke: rgba(255, 255, 255, .7);
  stroke-width: 3;
}
.lb.lb-road text { font-size: 30px; }
.lb text.lb-dark { font-size: 41px; font-weight: 500; fill: #1d1d1d; }
.lb text.lb-city { font-size: 49px; font-weight: 500; fill: #111; }
.lb text.lb-hp { font-size: 44px; font-weight: 500; fill: #111; }
.lb text.lb-campus { fill: #b5834f; }
.lb text.lb-park { fill: #3f9a35; }
.lb text.lb-hosp { fill: #ee5a62; }
.lb text.lb-nbhd { fill: #7488ab; }
.shields rect, .shields path { fill: #fff; stroke: #1a1a1a; stroke-width: 3; }
.shields text {
  font: 700 27px Roboto, sans-serif;
  fill: #2a2a2a;
  text-anchor: middle;
}
.poi-edu { fill: #c58a58; }
.poi-park { fill: #2fa516; }
.poi-hosp { fill: #ee6d74; }
.poi-rail { fill: #6b82dd; }
.poi-w { fill: #fff; }
.poi-nbhd { fill: #7f92b5; }
.marker { fill: #3887be; }
.mb-logo circle { fill: rgba(255, 255, 255, .9); }
.mb-logo .mb-hole { fill: #6d7d68; }
.mb-logo .mb-mark { fill: #fff; }
.mb-logo text {
  font: 700 52px Roboto, sans-serif;
  fill: #f4f4f4;
  stroke: rgba(70, 70, 70, .65);
  stroke-width: 5;
  paint-order: stroke;
}
.attrib {
  position: absolute;
  right: 0;
  bottom: 0;
  height: 20px;
  padding: 0 5px;
  background: rgba(255, 255, 255, .55);
  color: #555;
  font: 12px/20px "Liberation Sans", sans-serif;
  white-space: nowrap;
}
.attrib strong { margin-left: 2px; color: #444; font-weight: 700; }
```
